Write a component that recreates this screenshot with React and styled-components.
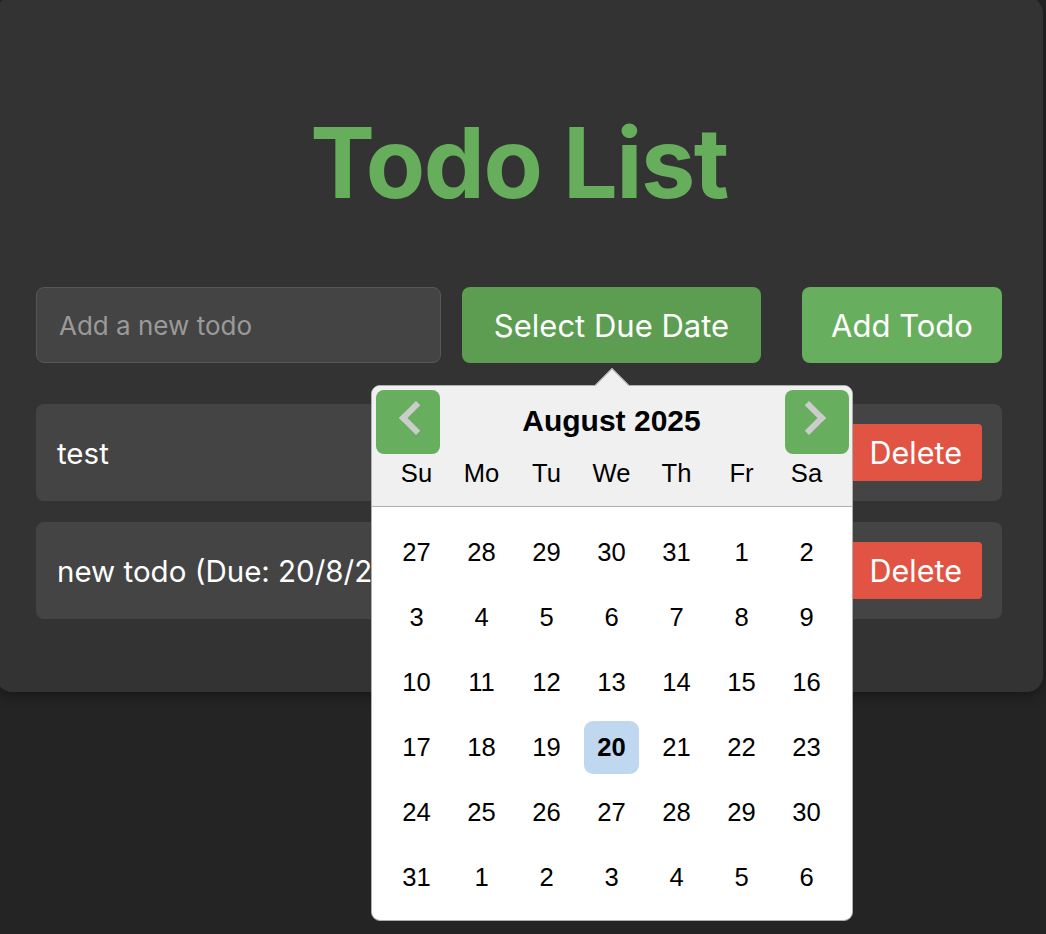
import React from 'react';
import styled, { createGlobalStyle } from 'styled-components';

/*
    ~~Styles~~
*/
const GlobalStyle = createGlobalStyle`
    body {
        margin: 0;
        background: #242424;
        font-family: Inter, "Noto Sans", sans-serif;
    }
`;

const Page = styled.div`
    height: 931px;
    overflow: hidden;
`;

const Card = styled.div`
    box-sizing: border-box;
    width: 1047px;
    margin: -3px 0 0 -4px;
    padding: 111px 41px 73px 40px;
    background: #333333;
    border-radius: 16px;
    box-shadow: 0 4px 12px rgba(0, 0, 0, 0.35);
`;

const Title = styled.h1`
    margin: 0 0 69px;
    font-size: 97px;
    line-height: 110px;
    font-weight: 700;
    letter-spacing: -1.5px;
    text-align: center;
    color: #66ad5c;
`;

const Form = styled.div`
    display: flex;
    gap: 21px;
    height: 76px;
    margin-bottom: 41px;
`;

const Input = styled.input`
    flex: 1;
    min-width: 0;
    box-sizing: border-box;
    padding: 0 22px;
    background: #444444;
    border: 1.5px solid #575757;
    border-radius: 8px;
    font-family: inherit;
    font-size: 26px;
    color: #fff;
    outline: none;

    &::placeholder {
        color: #9a9a9a;
    }
`;

const DateWrap = styled.div`
    position: relative;
    margin-right: 20px;
`;

const Button = styled.button`
    height: 76px;
    width: ${(p) => p.width}px;
    padding: 0;
    border: none;
    border-radius: 8px;
    background: ${(p) => (p.dark ? '#5c9d51' : '#67ae5e')};
    color: #fff;
    font-family: inherit;
    font-size: 31px;
    cursor: pointer;
`;

const List = styled.div`
    display: flex;
    flex-direction: column;
    gap: 21px;
`;

const Item = styled.div`
    display: flex;
    align-items: center;
    justify-content: space-between;
    height: 97px;
    padding: 0 20px 0 21px;
    background: #444444;
    border-radius: 8px;
    color: #fff;
    font-size: 29.5px;
`;

const DeleteButton = styled.button`
    height: 57px;
    padding: 0 20px;
    border: none;
    border-radius: 4px;
    background: #e15443;
    color: #fff;
    font-family: inherit;
    font-size: 30.5px;
`;

/* calendar */
const Popup = styled.div`
    position: absolute;
    z-index: 10;
    top: 98px;
    left: 50%;
    transform: translateX(-50%);
    box-sizing: border-box;
    width: 482px;
    background: #fff;
    border: 1px solid #aeaeae;
    border-radius: 9px;
    font-family: "Liberation Sans", Arial, sans-serif;
    color: #000;

    &::before {
        content: '';
        position: absolute;
        top: -13px;
        left: calc(50% - 12px);
        width: 24px;
        height: 24px;
        box-sizing: border-box;
        background: #f0f0f0;
        border-top: 1px solid #aeaeae;
        border-left: 1px solid #aeaeae;
        transform: rotate(45deg);
    }
`;

const CalHeader = styled.div`
    position: relative;
    padding-top: 15px;
    background: #f0f0f0;
    border-bottom: 1px solid #aeaeae;
    border-radius: 8px 8px 0 0;
    text-align: center;
`;

const MonthTitle = styled.div`
    font-size: 30px;
    font-weight: 700;
    line-height: 40px;
`;

const Week = styled.div`
    display: grid;
    grid-template-columns: repeat(7, 65px);
    justify-content: center;
    height: 65px;
    align-items: center;
`;

const DayName = styled.div`
    text-align: center;
    font-size: 25.6px;
`;

const NavButton = styled.button`
    position: absolute;
    top: 4px;
    ${(p) => (p.next ? 'right: 3px;' : 'left: 4px;')}
    width: 64px;
    height: 64px;
    padding: 0;
    border: none;
    border-radius: 8px;
    background: #67ae5e;
    display: flex;
    align-items: center;
    justify-content: center;

    &::after {
        content: '';
        width: 18px;
        height: 18px;
        margin: -8px ${(p) => (p.next ? '8px' : '-8px')} 0 ${(p) => (p.next ? '-8px' : '8px')};
        border-top: 6px solid #ccc;
        border-left: 6px solid #ccc;
        transform: rotate(${(p) => (p.next ? '135deg' : '-45deg')});
    }
`;

const Month = styled.div`
    padding: 13px 0 10px;
`;

const Day = styled.div`
    display: flex;
    align-items: center;
    justify-content: center;
`;

const DayInner = styled.span`
    display: flex;
    align-items: center;
    justify-content: center;
    width: 55px;
    height: 53px;
    border-radius: 9px;
    font-size: 25.6px;
    background: ${(p) => (p.selected ? '#bfd8ef' : 'transparent')};
    font-weight: ${(p) => (p.selected ? 700 : 400)};
`;
/* ------------------------------- */

const dayNames = ['Su', 'Mo', 'Tu', 'We', 'Th', 'Fr', 'Sa'];

const buildWeeks = () => {
    const days = [27, 28, 29, 30, 31];
    for (let d = 1; d <= 31; d++) days.push(d);
    for (let d = 1; d <= 6; d++) days.push(d);
    const weeks = [];
    for (let i = 0; i < days.length; i += 7) weeks.push(days.slice(i, i + 7));
    return weeks;
};

const Calendar = () => {
    const weeks = buildWeeks();
    return (
        <Popup>
            <CalHeader>
                <NavButton aria-label='Previous Month' />
                <MonthTitle>August 2025</MonthTitle>
                <NavButton next aria-label='Next Month' />
                <Week>
                    {dayNames.map((n) => (
                        <DayName key={n}>{n}</DayName>
                    ))}
                </Week>
            </CalHeader>
            <Month>
                {weeks.map((week, wi) => (
                    <Week key={wi}>
                        {week.map((d, di) => (
                            <Day key={di}>
                                <DayInner selected={wi === 3 && d === 20}>{d}</DayInner>
                            </Day>
                        ))}
                    </Week>
                ))}
            </Month>
        </Popup>
    );
};

const todos = ['test', 'new todo (Due: 20/8/2025)'];

const App = () => {
    return (
        <Page>
            <GlobalStyle />
            <Card>
                <Title>Todo List</Title>
                <Form>
                    <Input placeholder='Add a new todo' />
                    <DateWrap>
                        <Button dark width={299}>Select Due Date</Button>
                        <Calendar />
                    </DateWrap>
                    <Button width={200}>Add Todo</Button>
                </Form>
                <List>
                    {todos.map((t) => (
                        <Item key={t}>
                            <span>{t}</span>
                            <DeleteButton>Delete</DeleteButton>
                        </Item>
                    ))}
                </List>
            </Card>
        </Page>
    );
};

export default App;
